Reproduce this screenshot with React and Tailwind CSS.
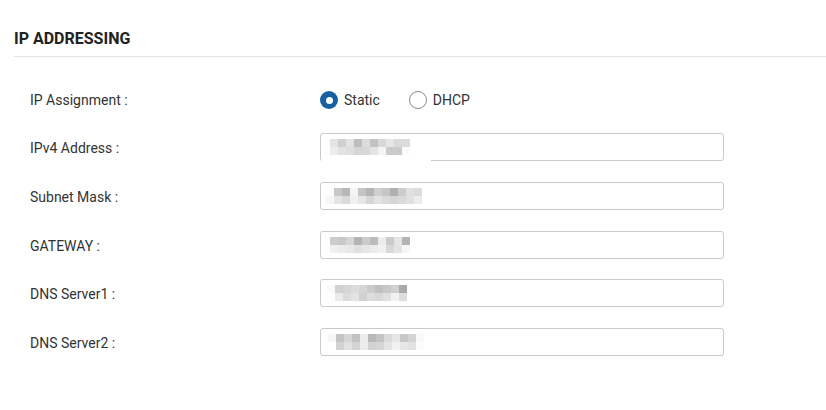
import { useState } from "react";

// pixelated (redacted) values, two rows of 8px cells each
const masks = {
  ipv4: [
    ["#e4e4e4", "#d0d0d0", "#e2e2e2", "#bdbdbd", "#dcdcdc", "#c2c2c2", "#d8d8d8", "#e6e6e6", "#dadada", "#dcdcdc"],
    ["#ececec", "#e2e2e2", "#dedede", "#d6d6d6", "#d8d8d8", "#e4e4e4", "#f4f4f4", "#cbcbcb", "#cbcbcb", "#fbfbfb"],
  ],
  subnet: [
    ["#fdfdfd", "#c8c8c8", "#b8b8b8", "#f4f4f4", "#c4c4c4", "#b4b4b4", "#cfcfcf", "#c6c6c6", "#b0b0b0", "#cccccc", "#e0e0e0", "#dcdcdc"],
    ["#f6f6f6", "#e4e4e4", "#dadada", "#f0f0f0", "#e6e6e6", "#d6d6d6", "#e2e2e2", "#dadada", "#d6d6d6", "#dadada", "#e0e0e0", "#ececec"],
  ],
  gateway: [
    ["#cdcdcd", "#c8c8c8", "#d6d6d6", "#b4b4b4", "#cbcbcb", "#bcbcbc", "#ececec", "#cbcbcb", "#e4e4e4", "#b4b4b4"],
    ["#f0f0f0", "#ececec", "#e8e8e8", "#e0e0e0", "#e6e6e6", "#ececec", "#f0f0f0", "#d8d8d8", "#e4e4e4", "#f6f6f6"],
  ],
  dns1: [
    ["#fafafa", "#d2d2d2", "#d6d6d6", "#dcdcdc", "#d6d6d6", "#cbcbcb", "#c0c0c0", "#c8c8c8", "#d0d0d0", "#aaaaaa", "#ffffff"],
    ["#ffffff", "#eaeaea", "#dcdcdc", "#e4e4e4", "#d0d0d0", "#dcdcdc", "#d8d8d8", "#e0e0e0", "#f2f2f2", "#dedede", "#ffffff"],
  ],
  dns2: [
    ["#f6f6f6", "#c4c4c4", "#d6d6d6", "#c2c2c2", "#ececec", "#b8b8b8", "#c4c4c4", "#dadada", "#e6e6e6", "#c8c8c8", "#d4d4d4", "#f8f8f8"],
    ["#ffffff", "#d2d2d2", "#e2e2e2", "#d4d4d4", "#ececec", "#d2d2d2", "#d6d6d6", "#e4e4e4", "#f2f2f2", "#e6e6e6", "#e2e2e2", "#fcfcfc"],
  ],
};

const fields = [
  { label: "IPv4 Address :", mask: "ipv4", offset: "ml-[9px]" },
  { label: "Subnet Mask :", mask: "subnet", offset: "ml-[5px]" },
  { label: "GATEWAY :", mask: "gateway", offset: "ml-[9px]" },
  { label: "DNS Server1 :", mask: "dns1", offset: "ml-[6px]" },
  { label: "DNS Server2 :", mask: "dns2", offset: "ml-[7px]" },
];

const Mosaic = ({ rows }) => (
  <div className="flex flex-col">
    {rows.map((row, i) => (
      <div key={i} className="flex">
        {row.map((c, j) => (
          <span key={j} className="block w-[8px] h-[8px]" style={{ backgroundColor: c }} />
        ))}
      </div>
    ))}
  </div>
);

const Radio = ({ checked, label, onClick }) => (
  <button type="button" onClick={onClick} className="flex items-center gap-[6px] cursor-pointer">
    {checked ? (
      <span className="w-[18px] h-[18px] rounded-full bg-[#1761a0] flex items-center justify-center">
        <span className="w-[7px] h-[7px] rounded-full bg-white" />
      </span>
    ) : (
      <span className="w-[18px] h-[18px] rounded-full border border-[#8a8a8a] bg-white" />
    )}
    <span className="text-[14px] text-[#333]">{label}</span>
  </button>
);

const App = () => {
  const [mode, setMode] = useState("static");

  return (
    <div
      className="min-h-screen w-[826px] bg-white pl-[14px] pt-[29px]"
      style={{ fontFamily: "Roboto, 'Liberation Sans', sans-serif" }}
    >
      {/* Section header */}
      <div className="border-b border-[#e2e2e2] pb-[7px]">
        <h2 className="text-[16px] leading-[20px] font-bold text-[#222]">IP ADDRESSING</h2>
      </div>

      {/* Form */}
      <div className="pl-[16px] pt-[29px]">
        <div className="flex items-center h-[28px]">
          <div className="w-[290px] text-[14px] text-[#333]">IP Assignment :</div>
          <div className="flex items-center gap-[29px]">
            <Radio checked={mode === "static"} label="Static" onClick={() => setMode("static")} />
            <Radio checked={mode === "dhcp"} label="DHCP" onClick={() => setMode("dhcp")} />
          </div>
        </div>

        <div className="flex flex-col gap-[20.75px] mt-[19px]">
          {fields.map((f) => (
            <div key={f.label} className="flex items-center h-[28px]">
              <div className="w-[290px] text-[14px] text-[#333] pt-[3px]">{f.label}</div>
              <div className="relative w-[404px] h-[28px] border border-[#c9c9c9] rounded-[3px] flex items-center">
                <div className={f.offset}>
                  <Mosaic rows={masks[f.mask]} />
                </div>
                {f.mask === "ipv4" && (
                  <span className="absolute left-[1px] top-[24px] w-[109px] h-[6px] bg-white" />
                )}
              </div>
            </div>
          ))}
        </div>
      </div>
    </div>
  );
};

export default App;
